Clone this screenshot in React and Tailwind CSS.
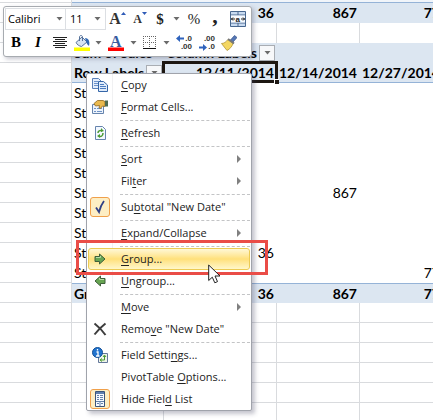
const columns = ['w-[72px]', 'w-[92px]', 'w-[113px]', 'w-[83px]', 'w-[83px]'];

const itemRows = [
  { label: 'Store 1' },
  { label: 'Store 2' },
  { label: 'Store 3' },
  { label: 'Store 4' },
  { label: 'Store 5' },
  { label: 'Store 6', c: '867' },
  { label: 'Store 7' },
  { label: 'Store 8' },
  { label: 'Store 9', b: '36' },
  { label: 'Store 10', d: '77' },
];

const gridLine = 'border-r border-b border-[#d9dbde]';
const band = 'bg-[#dce6f1] font-bold';

function Caret({ className = '' }) {
  return (
    <svg viewBox="0 0 7 4" className={`h-1 w-[7px] shrink-0 ${className}`} aria-hidden="true">
      <path d="M0.5 0h6L3.5 3.5z" fill="#6b6b6b" />
    </svg>
  );
}

function FilterButton({ label }) {
  return (
    <button
      type="button"
      aria-label={label}
      className="flex size-4 shrink-0 items-center justify-center border border-[#a9adb3] bg-[#f7f8fa]"
    >
      <Caret />
    </button>
  );
}

function Sheet() {
  return (
    <table className="w-[443px] table-fixed border-separate border-spacing-0 text-[14px] leading-[18px] whitespace-nowrap">
      <colgroup>
        {columns.map((width, i) => (
          <col key={i} className={width} />
        ))}
      </colgroup>
      <tbody>
        <tr className="h-[3px]">
          <td className={`${gridLine} h-[3px] p-0`} />
          <td colSpan={4} className="border-b border-[#95b3d7] bg-[#f1f5fa] p-0" />
        </tr>
        <tr className="h-5">
          <td className={`${gridLine} p-0`} />
          <td className={`${band} p-0`} />
          <td className={`${band} p-0 pr-[3px] text-right`}>36</td>
          <td className={`${band} p-0 pr-[3px] text-right`}>867</td>
          <td className={`${band} p-0 pr-[3px] text-right`}>77</td>
        </tr>
        <tr className="h-5">
          {columns.map((_, i) => (
            <td key={i} className={i === 0 ? `${gridLine} p-0` : 'border-r border-[#d9dbde] p-0'} />
          ))}
        </tr>
        <tr className="h-5">
          <td className={`${gridLine} p-0`} />
          <td className={`${band} p-0 pl-0.5`}>Sum of Sales</td>
          <td className={`${band} p-0`}>
            <div className="flex items-center justify-between pr-0.5 pl-0.5">
              Column Labels
              <FilterButton label="Filter columns" />
            </div>
          </td>
          <td colSpan={2} className={`${band} p-0`} />
        </tr>
        <tr className="h-5">
          <td className={`${gridLine} p-0`} />
          <td className={`${band} border-b border-[#95b3d7] p-0`}>
            <div className="flex items-center justify-between pr-0.5 pl-0.5">
              Row Labels
              <FilterButton label="Filter rows" />
            </div>
          </td>
          <td className={`${band} relative border-b border-[#95b3d7] p-0 pr-[3px] text-right`}>
            12/11/2014
            <span className="absolute -top-0.5 -right-px -bottom-px -left-0.5 border-3 border-[#1d1712]" />
            <span className="absolute -right-0.5 -bottom-0.5 size-[5px] border-t border-l border-white bg-[#1d1712]" />
          </td>
          <td className={`${band} border-b border-[#95b3d7] p-0 pr-[3px] text-right`}>12/14/2014</td>
          <td className={`${band} border-b border-[#95b3d7] p-0 pr-[3px] text-right`}>12/27/2014</td>
        </tr>
        {itemRows.map((row) => (
          <tr key={row.label} className="h-5">
            <td className={`${gridLine} p-0`} />
            <td className="p-0 pl-0.5">{row.label}</td>
            <td className="p-0 pr-[3px] text-right">{row.b}</td>
            <td className="p-0 pr-[3px] text-right">{row.c}</td>
            <td className="p-0 pr-[3px] text-right">{row.d}</td>
          </tr>
        ))}
        <tr className="h-5">
          <td className={`${gridLine} p-0`} />
          <td className={`${band} border-t border-[#95b3d7] p-0 pl-0.5`}>Grand Total</td>
          <td className={`${band} border-t border-[#95b3d7] p-0 pr-[3px] text-right`}>36</td>
          <td className={`${band} border-t border-[#95b3d7] p-0 pr-[3px] text-right`}>867</td>
          <td className={`${band} border-t border-[#95b3d7] p-0 pr-[3px] text-right`}>77</td>
        </tr>
        {[0, 1, 2, 3, 4, 5].map((n) => (
          <tr key={n} className="h-5">
            {columns.map((_, i) => (
              <td key={i} className={`${gridLine} p-0`} />
            ))}
          </tr>
        ))}
      </tbody>
    </table>
  );
}

function ToolButton({ label, className = '', children }) {
  return (
    <button type="button" aria-label={label} className={`flex h-6 shrink-0 items-center justify-center ${className}`}>
      {children}
    </button>
  );
}

function DecimalIcon({ increase }) {
  return (
    <span className="relative block h-4 w-4 font-['Liberation_Sans'] text-[8px] leading-2 font-bold text-[#333]">
      <span className="block text-right">{increase ? '.0' : '.00'}</span>
      <span className="block text-right">{increase ? '.00' : '.0'}</span>
      <svg
        viewBox="0 0 8 7"
        className={increase ? 'absolute top-0 left-0 h-[7px] w-2' : 'absolute bottom-0 left-0 h-[7px] w-2 rotate-180'}
      >
        <path d="M0 3.5 4 0v2.5h4v2H4V7z" fill="#2f63bd" />
      </svg>
    </span>
  );
}

function MiniToolbar() {
  return (
    <div className="absolute top-1.5 left-[3px] w-[249px] rounded-[3px] border border-[#a7abb0] bg-white p-px shadow-[2px_2px_4px_rgba(60,60,90,0.3)]">
      <div className="flex h-[22px] items-center">
        <button
          type="button"
          className="flex h-[22px] w-[61px] shrink-0 items-center justify-between border border-[#dcdfe3] px-0.5 font-['Open_Sans',sans-serif] text-[11px]"
        >
          Calibri
          <Caret />
        </button>
        <button
          type="button"
          className="flex h-[22px] w-10 shrink-0 items-center justify-between border border-l-0 border-[#dcdfe3] px-1 font-['Open_Sans',sans-serif] text-[11px]"
        >
          11
          <Caret />
        </button>
        <ToolButton label="Grow font" className="w-[23px]">
          <span className="font-['Liberation_Serif'] text-[16px] font-bold text-[#333]">A</span>
          <svg viewBox="0 0 5 3" className="mb-3 h-[3px] w-[5px]">
            <path d="M0 3h5L2.5 0z" fill="#2f5bb7" />
          </svg>
        </ToolButton>
        <ToolButton label="Shrink font" className="w-[22px]">
          <span className="font-['Liberation_Serif'] text-[12px] font-bold text-[#333]">A</span>
          <svg viewBox="0 0 5 3" className="mb-3 h-[3px] w-[5px]">
            <path d="M0 0h5L2.5 3z" fill="#2f5bb7" />
          </svg>
        </ToolButton>
        <ToolButton label="Accounting format" className="w-[18px] font-['Liberation_Serif'] text-[15px] font-bold text-[#222]">
          $
        </ToolButton>
        <Caret className="mx-1" />
        <ToolButton label="Percent style" className="w-5 font-['Liberation_Serif'] text-[15px] text-[#222]">
          %
        </ToolButton>
        <ToolButton label="Comma style" className="w-[22px] pb-2 font-['Liberation_Serif'] text-[22px] font-bold text-[#222]">
          ,
        </ToolButton>
        <ToolButton label="Merge and center" className="w-6">
          <svg viewBox="0 0 16 16" className="size-4">
            <path d="M0.5 0.5h15v15H.5z" fill="#c8daf0" stroke="#48678f" />
            <path d="M8 1v3M8 12v3M1 4h14M1 12h14" stroke="#48678f" />
            <path d="M1 4.5h14v7H1z" fill="#f8fbff" />
            <path d="M1 8h4M11 8h4M3 6.500 1.500 8 3 9.500M13 6.500 14.500 8 13 9.500" stroke="#222" fill="none" />
            <text x="5.5" y="10.5" fontSize="8" fontWeight="bold" fontFamily="Liberation Sans" fill="#222">a</text>
          </svg>
        </ToolButton>
      </div>
      <div className="flex h-[25px] items-center">
        <ToolButton label="Bold" className="w-[22px] font-['Liberation_Serif'] text-[15px] font-bold">
          B
        </ToolButton>
        <ToolButton label="Italic" className="w-[22px] font-['Liberation_Serif'] text-[15px] font-bold italic">
          I
        </ToolButton>
        <ToolButton label="Center" className="w-[22px]">
          <svg viewBox="0 0 14 11" className="h-[11px] w-3.5" shapeRendering="crispEdges">
            <path d="M0 .5h14M2 2.500h10M0 4.500h14M2 6.500h10M0 8.500h14M2 10.500h10" stroke="#222" />
          </svg>
        </ToolButton>
        <ToolButton label="Fill color" className="w-[22px]">
          <svg viewBox="0 0 16 16" className="size-4">
            <path d="M2 7.5 8 2l5 5-5.5 4.500C5 11 3 9.500 2 7.500z" fill="#d7e3f3" stroke="#57739b" />
            <path d="M5.500 6V2c0-2 3-2 3 0v4" fill="none" stroke="#57739b" />
            <path d="M11 3c4 0 5 4 4 8l-2-2-1-3z" fill="#336ab5" />
            <path d="M0 12.500h16v3.500H0z" fill="#ff0" />
          </svg>
        </ToolButton>
        <Caret className="mx-0.5" />
        <ToolButton label="Font color" className="w-6">
          <svg viewBox="0 0 16 16" className="size-4">
            <text x="2" y="11.5" fontSize="16" fontWeight="bold" fontFamily="Liberation Serif" fill="#375c9f">A</text>
            <path d="M0 12.500h16v3.500H0z" fill="#f00" />
          </svg>
        </ToolButton>
        <Caret className="mx-0.5" />
        <ToolButton label="Borders" className="w-[22px]">
          <svg viewBox="0 0 14 14" className="size-3.5">
            <path d="M.5 0v12M6.500 0v12M12.500 0v12M0 .5h13M0 6.500h13" stroke="#666" strokeDasharray="1 1" />
            <path d="M0 12.500h13" stroke="#111" />
          </svg>
        </ToolButton>
        <Caret className="mx-0.5" />
        <ToolButton label="Increase decimal" className="w-6">
          <DecimalIcon increase />
        </ToolButton>
        <ToolButton label="Decrease decimal" className="w-[22px]">
          <DecimalIcon />
        </ToolButton>
        <ToolButton label="Format painter" className="w-[22px]">
          <svg viewBox="0 0 16 16" className="size-4">
            <path d="m9.500 5 4-4.500 2.500 2L12 7z" fill="#5577b5" stroke="#304f86" strokeWidth=".7" />
            <path d="M.5 8.500C3 8.500 5 7 7 4.500l5 4c-1 3-3 5.500-6 7z" fill="#f4d763" stroke="#a98b28" strokeWidth=".7" />
            <path d="m7 4 6 4.500" stroke="#777" strokeWidth="2" />
          </svg>
        </ToolButton>
      </div>
    </div>
  );
}

function CopyIcon() {
  return (
    <svg viewBox="0 0 16 16" className="size-4">
      <path d="M.5 1.500h6l3 3v7h-9z" fill="#e4eefb" stroke="#5a80b8" />
      <path d="M2 4.500h4M2 6.500h5M2 8.500h5" stroke="#6d93cb" />
      <path d="M6.500 4.500h5l4 3.500v6.500h-9z" fill="#dfebfa" stroke="#3566a8" />
      <path d="M8 7.500h4M8 9.500h6M8 11.500h6" stroke="#4b7cc0" />
    </svg>
  );
}

function FormatIcon() {
  return (
    <svg viewBox="0 0 16 16" className="size-4">
      <path d="M.5 5.500h11v9H.5z" fill="#edf3fb" stroke="#6684ad" />
      <path d="M2 9.500h2M2 12.500h2M5 9.500h5M5 12.500h5" stroke="#6e93c6" />
      <path d="M2 4.500 5.500 1.500H11l2 1v5l-2.500-.5-2 2.500-1.500-.5.5-2.500-4 .5z" fill="#eab94e" stroke="#8d661e" strokeWidth=".8" />
      <path d="M13 1.500h3v6h-3z" fill="#4d6b52" />
    </svg>
  );
}

function RefreshIcon() {
  return (
    <svg viewBox="0 0 16 16" className="size-4">
      <path d="M3.500 1.500h7l3 3v10h-10z" fill="#f3f8ff" stroke="#6684ad" />
      <path d="M6 8c0-2 2-3 4-2M11 8c0 3-2 4-4 3" fill="none" stroke="#4b9a31" strokeWidth="1.5" />
      <path d="m9 3 3 3-3 1zM8 13l-3-2 3-2z" fill="#4b9a31" />
    </svg>
  );
}

function ArrowIcon({ left }) {
  return (
    <svg viewBox="0 0 12 12" className={left ? 'size-3 -scale-x-100' : 'size-3'}>
      <path d="M1 3.500h4.500V1l5.500 5-5.500 5V8.500H1z" fill="#67a552" stroke="#3f5f3b" />
      <path d="M2 4.500h4.500V3" fill="none" stroke="#b6dda8" />
    </svg>
  );
}

function CheckIcon() {
  return (
    <svg viewBox="0 0 16 16" className="size-4">
      <path d="M4 8.500 7 13c1-4 2-7 5-11" fill="none" stroke="#2f3f86" strokeWidth="1.8" />
    </svg>
  );
}

function RemoveIcon() {
  return (
    <svg viewBox="0 0 14 14" className="size-3.5">
      <path d="M1.500 1.500C6 5 9 8 12.500 13M12.500 1.500C8 5 5 8 1.500 12.500" fill="none" stroke="#3d3d3d" strokeWidth="2" />
    </svg>
  );
}

function SettingsIcon() {
  return (
    <svg viewBox="0 0 16 16" className="size-4">
      <path d="M6.500 6.500h9v9h-9z" fill="#eef4e9" stroke="#64779a" />
      <path d="M9 13h3.500V9M11 10l1.500-2L14 10M10 11.500 8 13l2 1.500" fill="none" stroke="#4b9a31" />
      <circle cx="5.500" cy="5.500" r="5" fill="#2274cf" stroke="#155095" />
      <path d="M5.500 2v1.500M4.500 5h1.500v4M4 9h3.500" fill="none" stroke="#fff" strokeWidth="1.3" />
    </svg>
  );
}

function FieldListIcon() {
  return (
    <svg viewBox="0 0 16 16" className="size-4">
      <path d="M3.500 .5h9v15h-9z" fill="#f5f9ff" stroke="#3c5479" />
      <path d="M4 1h8v2H4z" fill="#5e7fae" />
      <path d="M5 4.500h2M5 6.500h2M5 8.500h2M8 4.500h3M8 6.500h3M8 8.500h3M4 10.500h8M8 11v4M5 12.500h2M9 12.500h2" stroke="#6482ab" />
    </svg>
  );
}

const groups = [
  [
    { text: ['', 'C', 'opy'], icon: <CopyIcon /> },
    { text: ['', 'F', 'ormat Cells...'], icon: <FormatIcon /> },
  ],
  [{ text: ['', 'R', 'efresh'], icon: <RefreshIcon /> }],
  [
    { text: ['', 'S', 'ort'], submenu: true },
    { text: ['Fil', 't', 'er'], submenu: true },
  ],
  [{ text: ['Su', 'b', 'total "New Date"'], icon: <CheckIcon />, checked: true }],
  [{ text: ['', 'E', 'xpand/Collapse'], submenu: true }],
  [
    { text: ['', 'G', 'roup...'], icon: <ArrowIcon />, active: true },
    { text: ['', 'U', 'ngroup...'], icon: <ArrowIcon left /> },
  ],
  [
    { text: ['', 'M', 'ove'], submenu: true },
    { text: ['Remo', 'v', 'e "New Date"'], icon: <RemoveIcon /> },
  ],
  [
    { text: ['Field Setti', 'n', 'gs...'], icon: <SettingsIcon /> },
    { text: ['PivotTable ', 'O', 'ptions...'] },
    { text: ['Hide Fiel', 'd', ' List'], icon: <FieldListIcon />, checked: true },
  ],
];

function MenuItem({ text, icon, checked, active, submenu }) {
  const [before, key, after] = text;
  return (
    <div className="relative">
      <button
        type="button"
        role="menuitem"
        className={`flex h-[22px] w-full items-center rounded-[3px] border text-left whitespace-nowrap ${
          active
            ? 'border-[#eccb53] bg-linear-to-b from-[#fff8d5] via-[#ffe07a] to-[#fff7c9]'
            : 'border-transparent'
        }`}
      >
        <span
          className={`mr-[11px] ml-px flex h-5 w-5 shrink-0 items-center justify-center rounded-[3px] ${
            checked ? 'border border-[#f0a04b] bg-[#fdeec4]' : ''
          }`}
        >
          {icon}
        </span>
        <span>
          {before}
          <span className="underline underline-offset-2">{key}</span>
          {after}
        </span>
        {submenu && (
          <svg viewBox="0 0 4 8" className="mr-2 ml-auto h-2 w-1">
            <path d="M0 0v8l4-4z" fill="#808080" />
          </svg>
        )}
      </button>
      {active && (
        <>
          <span className="pointer-events-none absolute -top-2 -right-[18px] -bottom-[5px] -left-3 z-10 border-3 border-[#ea4d47]" />
          <svg viewBox="0 0 13 20" className="absolute top-4 left-[120px] z-20 h-5 w-[13px]">
            <path d="M.7 1v15.500l3.600-3.300 2.500 5.600 2.700-1.200L7 12h5z" fill="#fff" stroke="#222" />
          </svg>
        </>
      )}
    </div>
  );
}

function ContextMenu() {
  return (
    <div
      role="menu"
      className="absolute top-[73px] left-[86px] w-[166px] rounded-[2px] border border-[#a0a3ab] bg-white bg-linear-to-r from-transparent from-[25px] via-[#e2e3e6] via-[25px] to-transparent to-[26px] px-px font-['Open_Sans',sans-serif] text-[11px] text-[#222] shadow-[3px_3px_4px_rgba(60,60,90,0.3)]"
    >
      {groups.map((items, i) => (
        <div key={i}>
          {i > 0 && (
            <div className="flex h-1 items-center pl-8">
              <hr className="w-full border-t border-dashed border-[#c3c4c6]" />
            </div>
          )}
          {items.map((item) => (
            <MenuItem key={item.text.join('')} {...item} />
          ))}
        </div>
      ))}
    </div>
  );
}

export default function App() {
  return (
    <main className="relative h-screen overflow-hidden bg-white font-[Lato,sans-serif] text-black">
      <Sheet />
      <MiniToolbar />
      <ContextMenu />
    </main>
  );
}
